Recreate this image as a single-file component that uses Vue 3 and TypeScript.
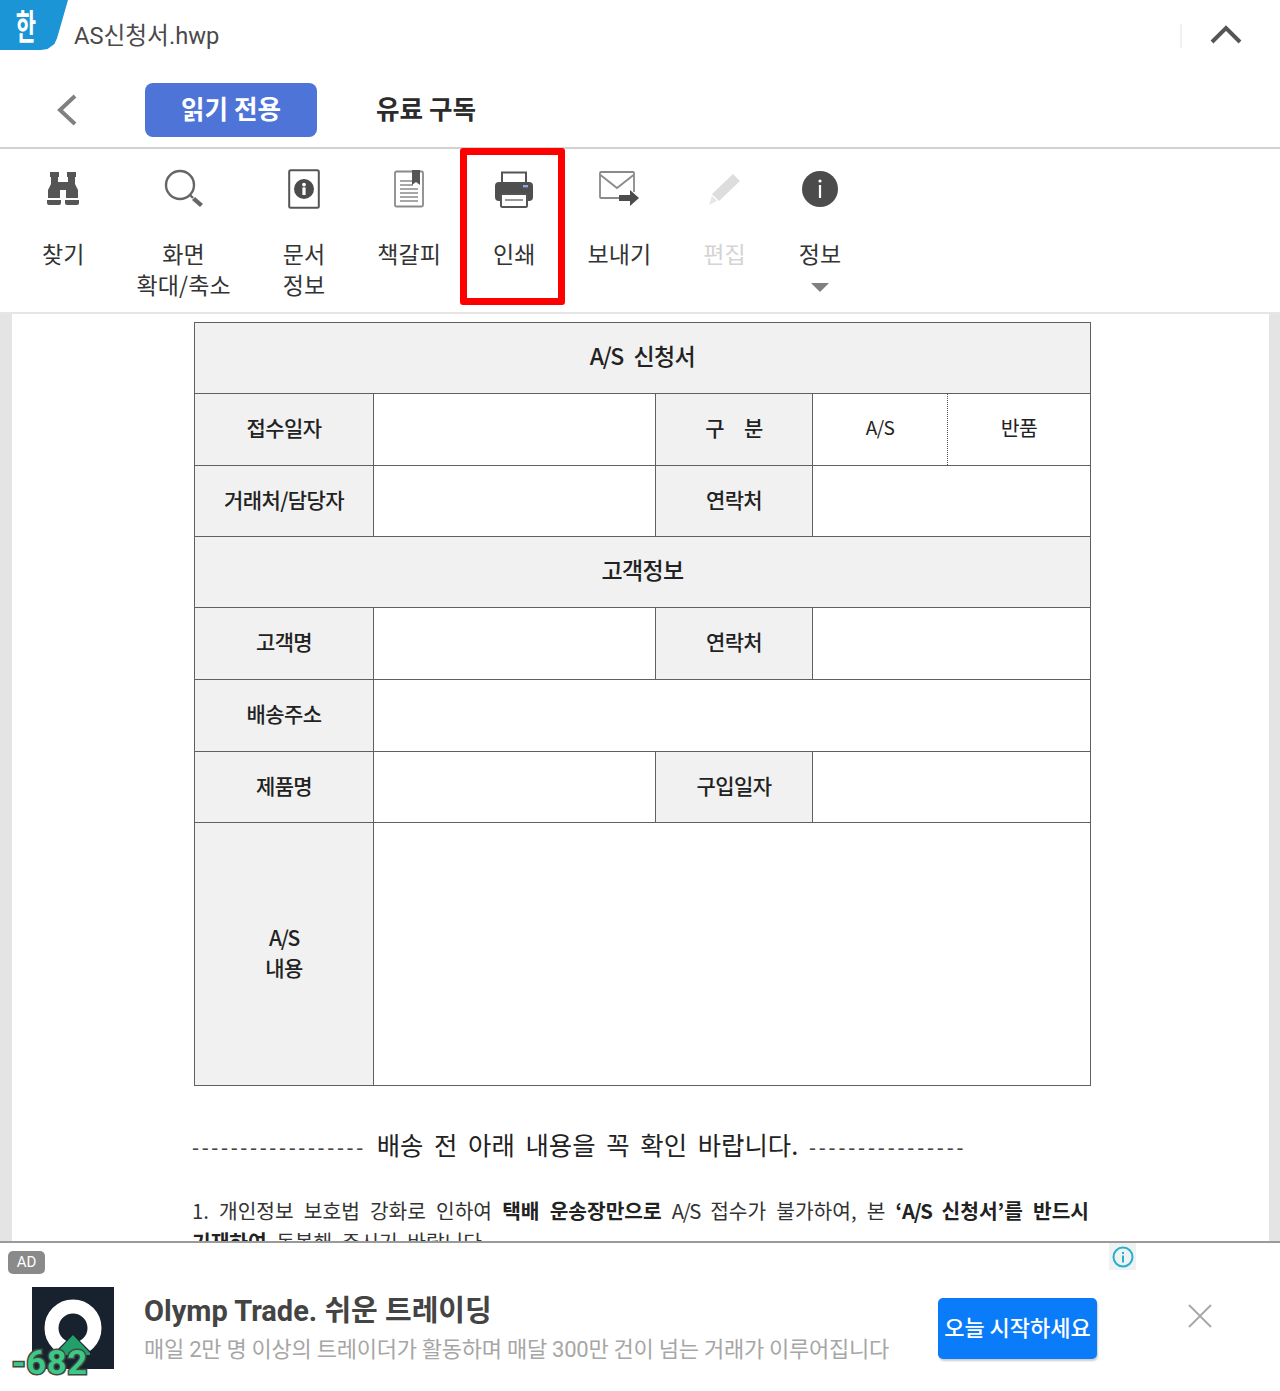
<template>
  <div class="screen">
    <header class="title-bar">
      <div class="brand"><span>한</span></div>
      <span class="file-name">AS신청서.hwp</span>
      <span class="title-divider"></span>
      <svg class="collapse" width="34" height="22" viewBox="0 0 34 22">
        <path d="M3 19 L17 5 L31 19" fill="none" stroke="#555" stroke-width="4" />
      </svg>
    </header>

    <nav class="tab-bar">
      <svg class="back" width="24" height="34" viewBox="0 0 24 34">
        <path d="M20 3 L5 17 L20 31" fill="none" stroke="#808080" stroke-width="4" />
      </svg>
      <button class="tab tab-active">읽기 전용</button>
      <button class="tab tab-plain">유료 구독</button>
    </nav>

    <section class="toolbar">
      <div v-for="tool in tools" :key="tool.id" class="tool" :class="{ disabled: tool.id === 'edit' }">
        <div class="tool-icon">
          <svg v-if="tool.id === 'find'" width="34" height="38" viewBox="0 0 34 38">
            <path fill="#555" d="M4 2h9v5h-1v5h10V7h-1V2h9v5h-1v7l3 6v8H20v-8h-6v8H2v-8l3-6V7H4z" />
            <path fill="#555" d="M1 30h14v3a2 2 0 0 1-2 2H3a2 2 0 0 1-2-2zM19 30h14v3a2 2 0 0 1-2 2H21a2 2 0 0 1-2-2z" />
          </svg>
          <svg v-else-if="tool.id === 'zoom'" width="40" height="40" viewBox="0 0 40 40">
            <circle cx="16" cy="16" r="14" fill="none" stroke="#666" stroke-width="2.4" />
            <path d="M26 26 L29 29" stroke="#666" stroke-width="2.4" />
            <path d="M28 31 L31 28 L39 35 L36 38 Z" fill="#666" />
          </svg>
          <svg v-else-if="tool.id === 'doc'" width="32" height="40" viewBox="0 0 32 40">
            <rect x="1.2" y="1.2" width="29.6" height="37.6" rx="1.5" fill="#fff" stroke="#555" stroke-width="2" />
            <circle cx="16" cy="20" r="10" fill="#4c4c4c" />
            <rect x="14.4" y="18.4" width="3.2" height="7.6" fill="#fff" />
            <circle cx="16" cy="15.6" r="1.9" fill="#fff" />
          </svg>
          <svg v-else-if="tool.id === 'bookmark'" width="30" height="38" viewBox="0 0 30 38">
            <rect x="1" y="1.5" width="28" height="35" rx="1.5" fill="#fff" stroke="#8a8a8a" stroke-width="1.8" />
            <path d="M6 11h13M6 15h13M6 19h18M6 23h18M6 27h18M6 31h18" stroke="#8a8a8a" stroke-width="1.6" />
            <path d="M18 0h8v15l-4-3-4 3z" fill="#555" />
          </svg>
          <svg v-else-if="tool.id === 'print'" width="38" height="38" viewBox="0 0 38 38">
            <path d="M7 12V2.5h24V12" fill="#fff" stroke="#555" stroke-width="2" />
            <rect x="0" y="12" width="38" height="19" rx="4" fill="#4f4f4f" />
            <rect x="28" y="15" width="5" height="2.4" fill="#8fa8d8" />
            <rect x="6" y="24" width="26" height="13" rx="1.5" fill="#fff" stroke="#555" stroke-width="2" />
            <rect x="10" y="29" width="18" height="2" fill="#999" />
          </svg>
          <svg v-else-if="tool.id === 'send'" width="40" height="36" viewBox="0 0 40 36">
            <path d="M23 27H2a1 1 0 0 1-1-1V2a1 1 0 0 1 1-1h32a1 1 0 0 1 1 1v19" fill="none" stroke="#8a8a8a" stroke-width="1.8" />
            <path d="M1.5 4 L18 17 L34.5 4" fill="none" stroke="#8a8a8a" stroke-width="1.8" />
            <path d="M20 24h11v-5l9 8-9 8v-5H20z" fill="#4c4c4c" />
          </svg>
          <svg v-else-if="tool.id === 'edit'" width="32" height="32" viewBox="0 0 32 32">
            <path d="M24 1 L31 8 L10 28 L3 21 Z" fill="#ddd" />
            <path d="M3 23 L8 28 L0 32 Z" fill="#e6e6e6" />
          </svg>
          <svg v-else width="36" height="36" viewBox="0 0 36 36">
            <circle cx="18" cy="18" r="18" fill="#4c4c4c" />
            <rect x="16.9" y="14" width="2.2" height="13" fill="#fff" />
            <circle cx="18" cy="10" r="1.6" fill="#fff" />
          </svg>
        </div>
        <div class="tool-label">
          <span v-for="line in tool.lines" :key="line">{{ line }}</span>
          <i v-if="tool.id === 'info'" class="caret"></i>
        </div>
        <div v-if="tool.id === 'print'" class="highlight"></div>
      </div>
    </section>

    <main class="viewer">
      <div class="page">
        <table class="form">
          <colgroup>
            <col style="width: 179px" />
            <col style="width: 282px" />
            <col style="width: 157px" />
            <col style="width: 135px" />
            <col />
          </colgroup>
          <tbody>
            <tr><th colspan="5" class="wide-head"><span class="narrow">A/S</span> 신청서</th></tr>
            <tr>
              <th>접수일자</th>
              <td></td>
              <th class="spaced">구 분</th>
              <td class="small dotted-r">A/S</td>
              <td class="small hangul dotted-l">반품</td>
            </tr>
            <tr>
              <th>거래처/담당자</th>
              <td></td>
              <th>연락처</th>
              <td colspan="2"></td>
            </tr>
            <tr><th colspan="5" class="wide-head">고객정보</th></tr>
            <tr>
              <th>고객명</th>
              <td></td>
              <th>연락처</th>
              <td colspan="2"></td>
            </tr>
            <tr>
              <th>배송주소</th>
              <td colspan="4"></td>
            </tr>
            <tr>
              <th>제품명</th>
              <td></td>
              <th>구입일자</th>
              <td colspan="2"></td>
            </tr>
            <tr>
              <th><span class="narrow">A/S</span><br />내용</th>
              <td colspan="4"></td>
            </tr>
          </tbody>
        </table>

        <p class="notice-head">
          <span class="dashes">------------------</span> 배송 전 아래 내용을 꼭 확인 바랍니다.
          <span class="dashes dashes-end">----------------</span>
        </p>
        <p class="notice-line">
          1. 개인정보 보호법 강화로 인하여 <b>택배 운송장만으로</b> <span class="narrow">A/S</span> 접수가 불가하여, 본
          <b>‘<span class="narrow">A/S</span> 신청서’를 반드시</b>
        </p>
        <p class="notice-line second"><b>기재하여</b> 동봉해 주시기 바랍니다.</p>
      </div>
    </main>

    <footer class="ad">
      <span class="ad-badge">AD</span>
      <span class="ad-info">
        <svg width="24" height="24" viewBox="0 0 24 24">
          <circle cx="12" cy="12" r="9.5" fill="none" stroke="#25b0cc" stroke-width="2" />
          <rect x="11" y="10.5" width="2" height="7" fill="#25b0cc" />
          <rect x="11" y="7" width="2" height="2" fill="#25b0cc" />
        </svg>
      </span>
      <div class="ad-logo">
        <svg width="82" height="82" viewBox="0 0 82 82">
          <rect width="82" height="82" fill="#18222f" />
          <circle cx="41" cy="41" r="21.5" fill="none" stroke="#fff" stroke-width="14" />
          <path d="M41 47 L18 70 H64 Z" fill="#18222f" />
          <path d="M41 48 L58 66 V68 H24 V66 Z" fill="#23a06a" />
        </svg>
        <span class="ad-delta">-682</span>
      </div>
      <div class="ad-copy">
        <div class="ad-title">Olymp Trade. 쉬운 트레이딩</div>
        <div class="ad-desc">매일 2만 명 이상의 트레이더가 활동하며 매달 300만 건이 넘는 거래가 이루어집니다</div>
      </div>
      <button class="ad-cta">오늘 시작하세요</button>
      <svg class="ad-close" width="26" height="26" viewBox="0 0 26 26">
        <path d="M2 2 L24 24 M24 2 L2 24" stroke="#a6a6a6" stroke-width="1.8" />
      </svg>
    </footer>
  </div>
</template>

<script setup lang="ts">
const tools = [
  { id: 'find', lines: ['찾기'] },
  { id: 'zoom', lines: ['화면', '확대/축소'] },
  { id: 'doc', lines: ['문서', '정보'] },
  { id: 'bookmark', lines: ['책갈피'] },
  { id: 'print', lines: ['인쇄'] },
  { id: 'send', lines: ['보내기'] },
  { id: 'edit', lines: ['편집'] },
  { id: 'info', lines: ['정보'] },
];
</script>

<style>
html,
body {
  margin: 0;
  background: #fff;
}
</style>

<style scoped>
.screen {
  width: 1280px;
  height: 1391px;
  overflow: hidden;
  display: flex;
  flex-direction: column;
  font-family: Roboto, "Noto Sans CJK KR", sans-serif;
  color: #222;
}

.title-bar {
  height: 70px;
  flex: none;
  display: flex;
  align-items: flex-start;
}

.brand {
  width: 68px;
  height: 50px;
  background: #1b95d6;
  clip-path: polygon(0 0, 100% 0, 84% 76%, 80% 88%, 70% 98%, 60% 100%, 0 100%);
  color: #fff;
  font: 700 26px/50px "Noto Sans CJK KR", sans-serif;
  padding-left: 14px;
  box-sizing: border-box;
}

.brand span {
  display: inline-block;
  transform: scale(0.85, 1.35);
}

.file-name {
  margin: 20px 0 0 6px;
  font-size: 23.7px;
  line-height: 32px;
  color: #4a4a4a;
}

.title-divider {
  width: 2px;
  height: 24px;
  margin: 24px 0 0 auto;
  background: #f0f0f0;
}

.collapse {
  margin: 23px 37px 0 27px;
}

.tab-bar {
  height: 77px;
  flex: none;
  display: flex;
  align-items: flex-start;
  border-bottom: 2px solid #d2d2d2;
}

.back {
  margin: 23px 66px 0 55px;
}

.tab {
  height: 54px;
  margin-top: 13px;
  padding: 0 0 5px;
  border: none;
  border-radius: 8px;
  background: none;
  font: 700 25.6px "Noto Sans CJK KR", sans-serif;
  color: #2b2b2b;
  width: 172px;
}

.tab-active {
  background: #4f74d8;
  color: #fff;
}

.tab-plain {
  margin-left: 23px;
}

.toolbar {
  height: 165px;
  flex: none;
  display: flex;
  gap: 52px;
  padding-left: 42px;
  box-sizing: border-box;
  border-bottom: 2px solid #e6e6e6;
}

.tool {
  position: relative;
  display: flex;
  flex-direction: column;
  align-items: center;
}

.tool:last-child {
  margin-left: 1px;
}

.tool-icon {
  height: 40px;
  margin-top: 20px;
  display: flex;
  align-items: center;
  justify-content: center;
}

.tool-label {
  margin-top: 29px;
  display: flex;
  flex-direction: column;
  align-items: center;
  font: 400 23px/31px "Noto Sans CJK KR", sans-serif;
  letter-spacing: 0.1px;
  color: #333;
  white-space: nowrap;
}

.disabled .tool-label {
  color: #d4d4d4;
}

.caret {
  width: 0;
  height: 0;
  margin-top: 14px;
  border-left: 9px solid transparent;
  border-right: 9px solid transparent;
  border-top: 9px solid #808080;
}

.highlight {
  position: absolute;
  top: -1px;
  left: -33px;
  width: 105px;
  height: 157px;
  box-sizing: border-box;
  border: 7px solid #f00;
  border-radius: 3px;
}

.viewer {
  height: 927px;
  flex: none;
  overflow: hidden;
  padding: 0 11px 0 12px;
  background: #e4e4e4;
  border-bottom: 2px solid #9a9a9a;
  width: 1257px;
}

.page {
  height: 927px;
  background: #fff;
  padding: 8px 0 0 180px;
  box-sizing: border-box;
  overflow: hidden;
}

.form {
  width: 897px;
  table-layout: fixed;
  border-collapse: collapse;
  margin-left: 2px;
  font-family: "Noto Sans CJK KR", sans-serif;
  color: #222;
}

.form tr {
  height: 71px;
}

.form tr:nth-child(2),
.form tr:nth-child(5),
.form tr:nth-child(6) {
  height: 72px;
}

.form tr:last-child {
  height: 263px;
}

.form th,
.form td {
  padding: 0 0 5px;
  border: 1px solid #606060;
  background: #fff;
  text-align: center;
  font-size: 21px;
  line-height: 30px;
  font-weight: 500;
  letter-spacing: -0.6px;
}

.form th {
  background: #f1f1f1;
}

.form .wide-head {
  padding-bottom: 7px;
  font-size: 23px;
  font-weight: 500;
  word-spacing: 6px;
}

.form .small {
  font-size: 19px;
  font-weight: 400;
}

.form .small.hangul {
  font-size: 20.5px;
}

.form .dotted-r {
  border-right: 1px dotted #555;
}

.form .dotted-l {
  border-left: 1px dotted #555;
}

.form .spaced {
  word-spacing: 16px;
}

.narrow {
  letter-spacing: -1.4px;
}

.notice-head {
  width: 790px;
  margin: 38px 0 0;
  font: 400 25.4px/40px "Noto Sans CJK KR", sans-serif;
  white-space: nowrap;
  word-spacing: 5px;
  color: #222;
}

.dashes {
  font-family: "Liberation Sans", sans-serif;
  font-size: 21px;
  letter-spacing: 2.67px;
  color: #444;
}

.dashes-end {
  letter-spacing: 2.85px;
}

.notice-line {
  width: 897px;
  margin: 27px 0 0;
  font: 400 20.3px/31px "Noto Sans CJK KR", sans-serif;
  text-align: justify;
  text-align-last: justify;
  white-space: normal;
  color: #333;
}

.notice-line b {
  font-weight: 700;
  color: #222;
}

.notice-line.second {
  margin: 0;
  text-align-last: left;
  word-spacing: 5px;
}

.ad {
  position: relative;
  height: 148px;
  flex: none;
  background: #fff;
}

.ad-badge {
  position: absolute;
  top: 8px;
  left: 8px;
  width: 37px;
  height: 23px;
  border-radius: 5px;
  background: #8a8a8a;
  color: #fff;
  font-size: 15px;
  line-height: 23px;
  text-align: center;
}

.ad-info {
  position: absolute;
  top: 0;
  left: 1109px;
  width: 27px;
  height: 27px;
  background: #eef2f3;
  display: flex;
  align-items: center;
  justify-content: center;
}

.ad-logo {
  position: absolute;
  top: 44px;
  left: 32px;
  width: 82px;
  height: 82px;
}

.ad-delta {
  position: absolute;
  left: -20px;
  bottom: -11px;
  font: 700 34px/36px Roboto, sans-serif;
  color: #3cc985;
  -webkit-text-stroke: 3px #3f4a45;
  paint-order: stroke fill;
  letter-spacing: 1px;
}

.ad-copy {
  position: absolute;
  top: 48px;
  left: 144px;
}

.ad-title {
  font: 700 29px/40px Roboto, "Noto Sans CJK KR", sans-serif;
  color: #444;
  white-space: nowrap;
}

.ad-desc {
  margin-top: 1px;
  font: 400 22px/36px Roboto, "Noto Sans CJK KR", sans-serif;
  letter-spacing: -0.26px;
  color: #a6a6a6;
  white-space: nowrap;
}

.ad-cta {
  position: absolute;
  top: 55px;
  left: 938px;
  width: 159px;
  height: 61px;
  padding: 0 0 5px;
  border: none;
  border-radius: 5px;
  background: #0a7cfa;
  box-shadow: 1px 2px 2px rgba(0, 0, 0, 0.2);
  color: #fff;
  font: 500 22px "Noto Sans CJK KR", sans-serif;
  white-space: nowrap;
}

.ad-close {
  position: absolute;
  top: 60px;
  left: 1187px;
}
</style>
